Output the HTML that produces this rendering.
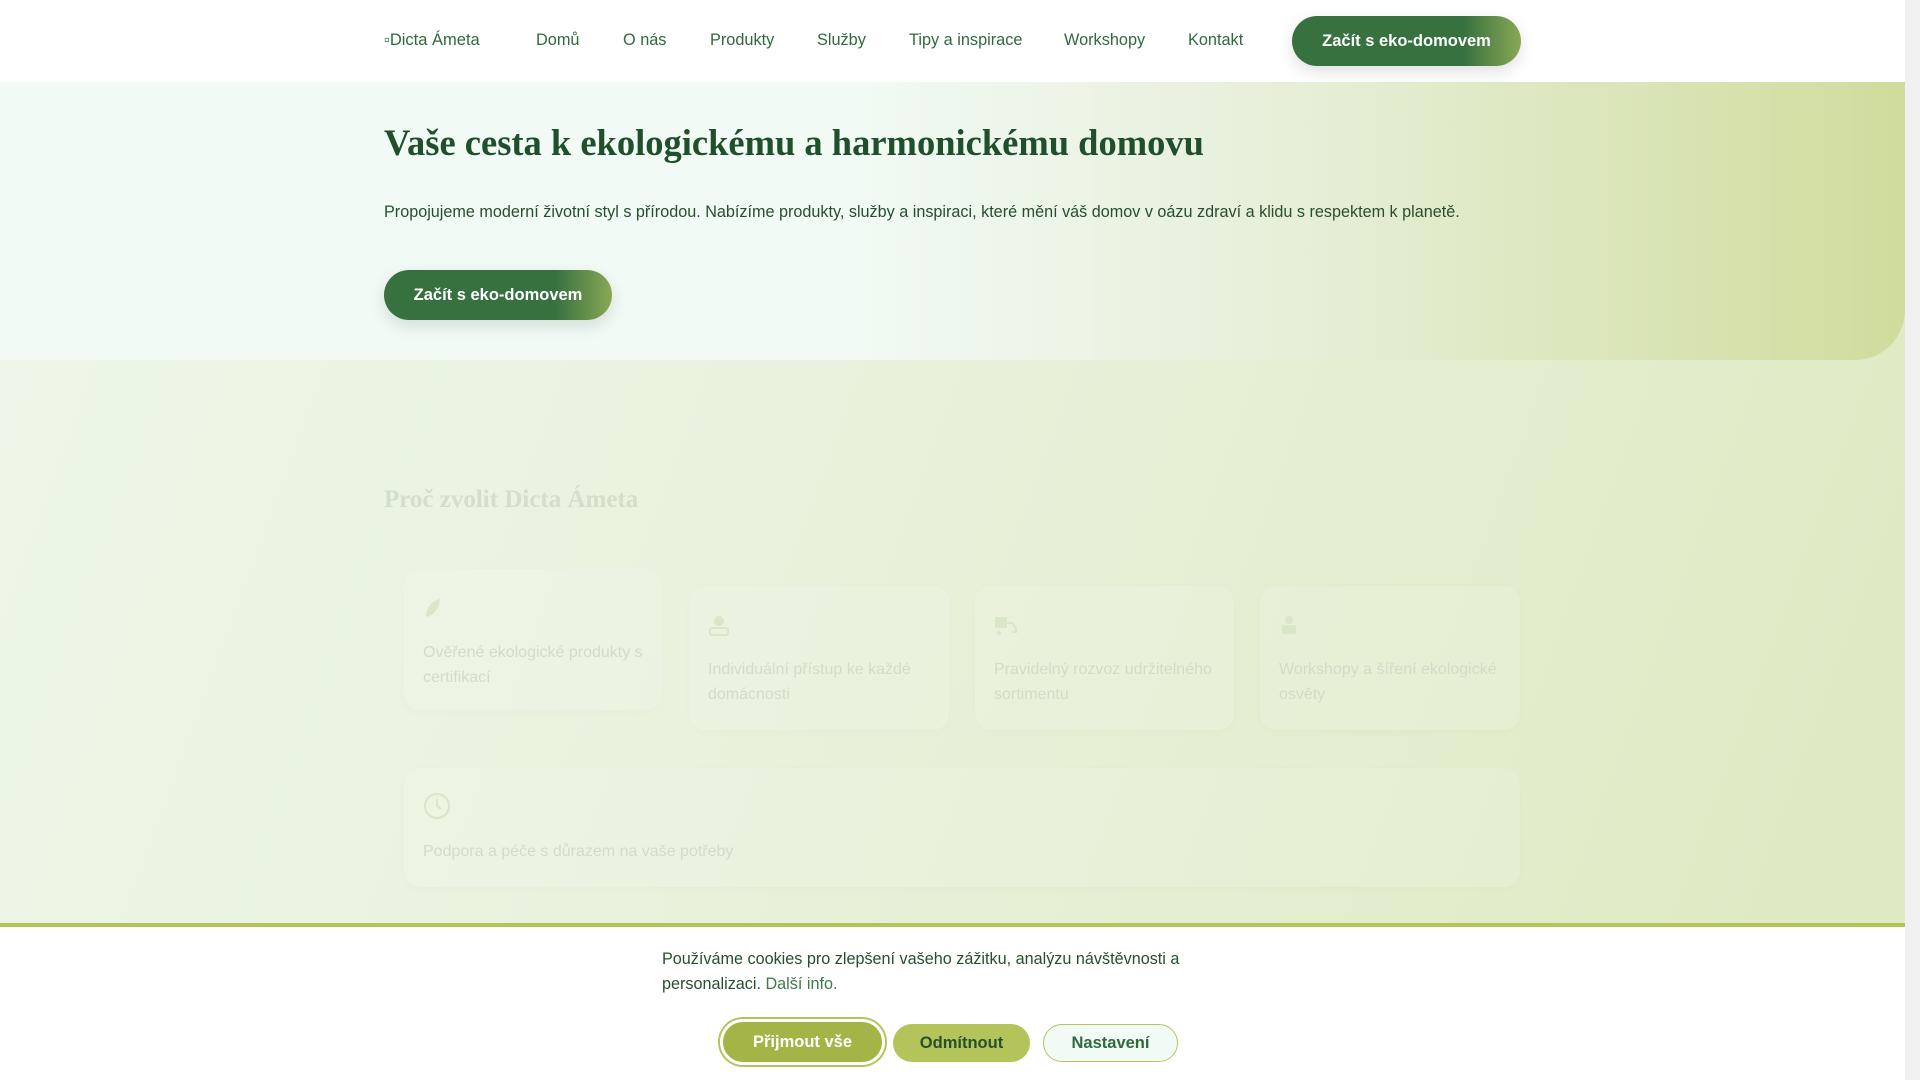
<!DOCTYPE html>
<html><head><meta charset="utf-8"><style>
*{margin:0;padding:0;box-sizing:border-box}
body{width:1920px;height:1080px;overflow:hidden;position:relative;font-family:"Liberation Sans",sans-serif;background:linear-gradient(110deg,#eef7ea 0%,#e7f1d9 50%,#dde9c0 100%)}
.sb{position:absolute;right:0;top:0;width:15px;height:1080px;background:#f0f0f0}
header{position:absolute;left:0;top:0;width:1905px;height:82px;background:#fff}
.logo{position:absolute;left:384px;top:31px;font-size:16.5px;color:#2f6a3c}
nav a{position:absolute;top:31px;font-size:16.3px;color:#2f6a3c;text-decoration:none}
.btn{position:absolute;border-radius:26px;background:linear-gradient(90deg,#377140 0%,#377140 75%,#88a855 100%);color:#fff;font-weight:bold;font-size:16.5px;display:flex;align-items:center;justify-content:center;box-shadow:0 6px 16px rgba(0,0,0,.12)}
.hero{position:absolute;left:0;top:82px;width:1905px;height:278px;background:linear-gradient(90deg,#f1faf4 0%,#f1faf4 45%,#e5eed5 70%,#d0dc9c 100%);border-bottom-right-radius:50px}
h1{position:absolute;left:384px;top:121px;font-family:"Liberation Serif",serif;font-size:36.5px;color:#1f4f2b;font-weight:bold}
.p{position:absolute;left:384px;top:203px;font-size:16.2px;color:#264f2e}
h2{position:absolute;left:384px;top:486px;font-family:"Liberation Serif",serif;font-size:25px;color:#d3dfcb;font-weight:bold}
.card{position:absolute;border-radius:16px;background:rgba(255,255,255,.12);box-shadow:0 2px 10px rgba(0,0,0,.02)}
.card .t{position:absolute;left:19px;font-size:16px;line-height:25px;color:#d1dcc8}
.card .i{position:absolute;left:19px;color:#d4e2c4;font-size:16px}
.cookie{position:absolute;left:0;top:923px;width:1905px;height:157px;background:#fff;border-top:4px solid #b5c45a}
.ct{position:absolute;left:662px;top:947px;width:540px;font-size:16.2px;line-height:25px;color:#264f2e}
.cb{position:absolute;border-radius:24px;font-weight:bold;font-size:16.5px;display:flex;align-items:center;justify-content:center}
</style></head><body>
<header>
<div class="logo">▫Dicta Ámeta</div>
<nav><a style="left:536px">Domů</a><a style="left:623px">O nás</a><a style="left:710px">Produkty</a><a style="left:817px">Služby</a><a style="left:909px">Tipy a inspirace</a><a style="left:1064px">Workshopy</a><a style="left:1188px">Kontakt</a></nav>
<div class="btn" style="left:1292px;top:16px;width:229px;height:50px">Začít s eko-domovem</div>
</header>
<div class="hero"></div>
<h1>Vaše cesta k ekologickému a harmonickému domovu</h1>
<div class="p">Propojujeme moderní životní styl s přírodou. Nabízíme produkty, služby a inspiraci, které mění váš domov v oázu zdraví a klidu s respektem k planetě.</div>
<div class="btn" style="left:384px;top:270px;width:228px;height:50px">Začít s eko-domovem</div>
<h2>Proč zvolit Dicta Ámeta</h2>
<div class="card" style="left:404px;top:569px;width:258px;height:141px"><svg class="i" style="top:28px" width="20" height="22" viewBox="0 0 20 22"><path d="M3 20C3 10 9 4 17 2C16 12 11 18 3 20Z" fill="#d9e6c8"/></svg><div class="t" style="top:71px">Ověřené ekologické produkty s certifikací</div></div>
<div class="card" style="left:689px;top:586px;width:260px;height:144px"><svg class="i" style="top:28px" width="22" height="22" viewBox="0 0 22 22"><circle cx="11" cy="7" r="5" fill="#d9e6c8"/><rect x="2" y="14" width="18" height="7" rx="2" fill="none" stroke="#d9e6c8" stroke-width="2"/></svg><div class="t" style="top:71px">Individuální přístup ke každé domácnosti</div></div>
<div class="card" style="left:975px;top:586px;width:259px;height:144px"><svg class="i" style="top:30px" width="24" height="20" viewBox="0 0 24 20"><rect x="1" y="1" width="12" height="11" fill="#d9e6c8"/><path d="M13 7h5l4 5v4h-4" fill="none" stroke="#d9e6c8" stroke-width="2"/><circle cx="5" cy="17" r="2" fill="#d9e6c8"/></svg><div class="t" style="top:71px">Pravidelný rozvoz udržitelného sortimentu</div></div>
<div class="card" style="left:1260px;top:586px;width:260px;height:144px"><svg class="i" style="top:28px" width="20" height="22" viewBox="0 0 20 22"><circle cx="10" cy="6" r="4" fill="#d9e6c8"/><rect x="3" y="11" width="14" height="9" rx="2" fill="#d9e6c8"/></svg><div class="t" style="top:71px">Workshopy a šíření ekologické osvěty</div></div>
<div class="card" style="left:404px;top:768px;width:1116px;height:119px"><svg class="i" style="top:24px" width="28" height="28" viewBox="0 0 28 28"><circle cx="14" cy="14" r="12" fill="none" stroke="#d9e6c8" stroke-width="2"/><path d="M14 7v7l4 3" fill="none" stroke="#d9e6c8" stroke-width="2"/></svg><div class="t" style="top:71px">Podpora a péče s důrazem na vaše potřeby</div></div>
<div class="cookie"></div>
<div class="ct">Používáme cookies pro zlepšení vašeho zážitku, analýzu návštěvnosti a personalizaci. <span style="color:#3f7a4a">Další info.</span></div>
<div class="cb" style="left:720px;top:1019px;width:165px;height:46px;background:#a5b447;color:#fff;border:3px solid #fff;box-shadow:0 0 0 2px #b5c45a">Přijmout vše</div>
<div class="cb" style="left:893px;top:1024px;width:137px;height:38px;background:#b5c45a;color:#264f2e">Odmítnout</div>
<div class="cb" style="left:1043px;top:1024px;width:135px;height:38px;background:#f1faf4;color:#2f6a3c;border:1px solid #b5c45a">Nastavení</div>
<div class="sb"></div>
</body></html>
